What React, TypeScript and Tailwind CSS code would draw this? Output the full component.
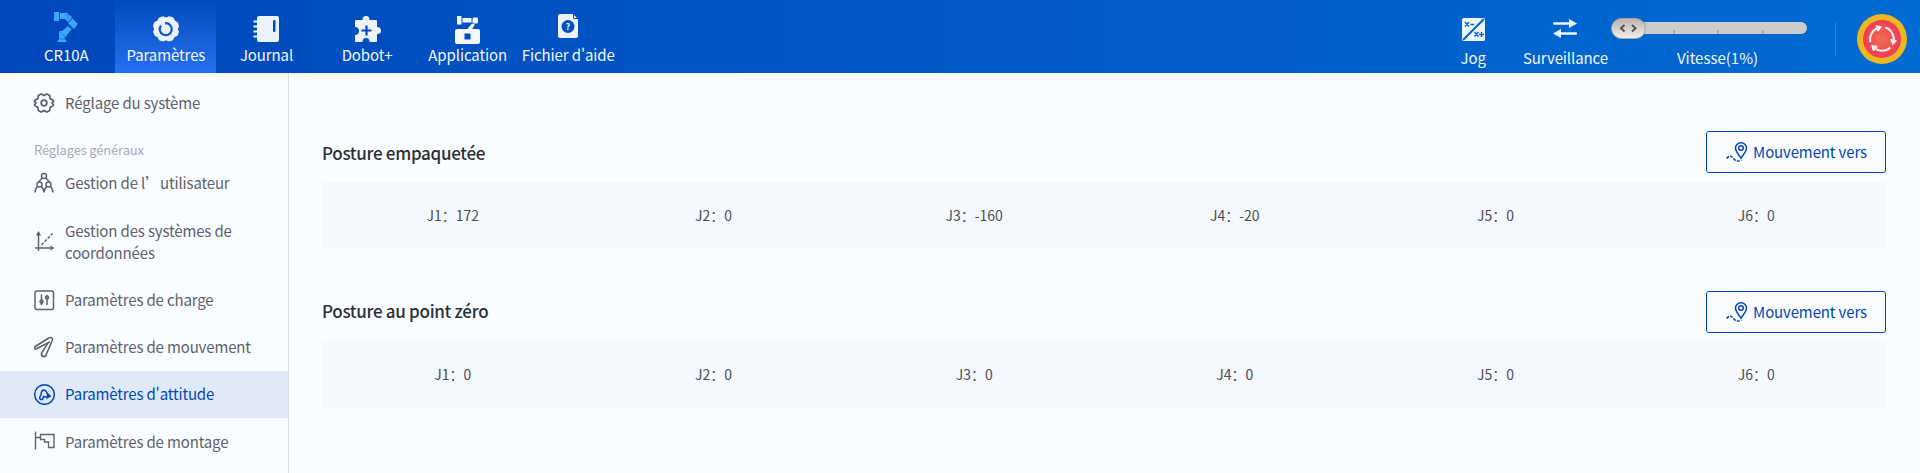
import React from "react";

type P = { children?: React.ReactNode };

const Tab = ({ label, active, first, children }: P & { label: string; active?: boolean; first?: boolean }) => (
  <div
    className={
      "flex h-[73px] w-[100.6px] shrink-0 flex-col items-center " +
      (active ? "bg-linear-to-b from-[#004bbd] to-[#2471ef] " : "") +
      (first ? "pl-[3px]" : "pl-px")
    }
  >
    <div className="mt-[11px] flex h-[32px] items-center">{children}</div>
    <span className="text-[15px] leading-6 tracking-[-0.1px] whitespace-nowrap">{label}</span>
  </div>
);

const Item = ({ label, active, tall, low, children }: P & { label: string; active?: boolean; tall?: boolean; low?: boolean }) => (
  <div
    className={
      "flex shrink-0 items-center pl-[33px] " +
      (tall ? "h-[71px] " : "h-[47px] ") +
      (active ? "bg-[#e0e9f8] text-[#0047bb]" : "text-[#5f616e]")
    }
  >
    <svg width="22" height="22" viewBox="0 0 22 22" fill="none" stroke="currentColor" strokeWidth="1.5" className="mr-[10px] -mt-px shrink-0">
      {children}
    </svg>
    <span className={"w-[200px] text-[15px] leading-[22px] tracking-[-0.15px] " + (low ? "mt-px" : "-mt-px")}>{label}</span>
  </div>
);

const Posture = ({ title, values, second }: { title: string; values: number[]; second?: boolean }) => (
  <section>
    <div className="flex h-[42px] items-center justify-between">
      <h2 className={"text-[17px] font-medium tracking-[-0.3px] text-[#2b2f38] " + (second ? "-mt-0.5" : "mt-px")}>{title}</h2>
      <button className="flex h-[42px] w-[180px] items-center justify-center rounded-[3px] border border-[#0047bb] pl-px text-[15px] tracking-[-0.13px] text-[#0047bb]">
        <svg width="22" height="22" viewBox="0 0 22 22" fill="none" stroke="currentColor" strokeWidth="1.5" className="mr-[5px]">
          <path d="M15 17C11.500 12.500 9.500 10 9.500 7.200a5.500 5.500 0 0 1 11 0C20.500 10 18.500 12.500 15 17Z" />
          <circle cx="15" cy="7" r="2.300" />
          <path d="M.700 17.500C3 14.500 5 14.500 7 17C9 19.700 11 21 15.500 19" strokeDasharray="3 1.200" />
        </svg>
        Mouvement vers
      </button>
    </div>
    <div
      className={
        "grid grid-cols-6 items-center rounded-[4px] bg-[#f5f8fc] text-center text-[14px] text-[#4c4d54] " +
        (second ? "mt-[8px] h-[68px]" : "mt-[9px] h-[67px]")
      }
    >
      {values.map((v, i) => (
        <span key={i} className={second ? "-mt-0.5 pl-px" : "pl-px"}>{`J${i + 1}：${v}`}</span>
      ))}
    </div>
  </section>
);

export default function App() {
  return (
    <div
      lang="zh-CN"
      className="flex h-[473px] w-[1920px] flex-col overflow-hidden bg-[#fafdff] font-['Noto_Sans_CJK_SC',sans-serif]"
    >
      <header className="flex h-[73px] shrink-0 bg-linear-to-r from-[#0047bb] to-[#006bd2] pl-[14.5px] text-[#f2f7ff]">
        <Tab label="CR10A" first>
          <svg width="26" height="32" viewBox="0 0 26 32" fill="#3fa6ff">
            <path d="M1 1h5v9H1zM7 2h8v6H7zM15 3l4 3-4 5-3-3V4zM19 7l6 6-4 5-6-6zM19 18l-7 8-4-5 7-6zM6 20h6l2 4-3 4H6zM6 28h6l2 3H4z" />
            <path d="M6.500 1v8M15 3v5M20 7l-5 5M15 15l4 4M6 20l6 6M5 28h8" stroke="#0b67ce" strokeWidth=".700" />
          </svg>
        </Tab>
        <Tab label="Paramètres" active>
          <svg width="26" height="26" viewBox="0 0 26 26" className="mt-1">
            <path
              fill="#edf3fb"
              stroke="#edf3fb"
              strokeLinejoin="round"
              d="M10 .800 13 2l3-1.200 4 1 1.700 3.400 3 1.600.800 4-1.300 2.200 1.300 2.500-1.200 3.900-3.200 1.500L19.500 24l-3.700 1L13 23.800 10.200 25l-3.900-1.100-1.500-3.100-3-1.500-1.300-3.800L1.800 13 .500 10.500l1-3.900 3-1.500L6.200 2z"
            />
            <path d="M8 9.500A6 6 0 1 0 13 7.200M12 7.300h3.500" fill="none" stroke="#0e5acd" strokeWidth="2.200" />
          </svg>
        </Tab>
        <Tab label="Journal">
          <svg width="26" height="26" viewBox="0 0 26 26" fill="#edf3fb" className="mt-1">
            <rect x="4" y="0" width="22" height="26" rx="2" />
            <path d="M.500 4.500h6v2h-6zM.500 9.500h6v2h-6zM.500 14.500h6v2h-6zM.500 19.500h6v2h-6z" />
            <rect x="20" y="4" width="2.500" height="12" rx="1.200" fill="#004cbd" />
          </svg>
        </Tab>
        <Tab label="Dobot+">
          <svg width="27" height="26" viewBox="0 0 27 26" className="mt-1">
            <path
              fill="#edf3fb"
              d="M2 4h6.500C8.500 1.500 9.500 0 12 0s3.500 1.500 3.500 4H22q1 0 1 1v6c2.500 0 4 1.500 4 3.700S25.500 18 23 18v7q0 1-1 1h-6.500c0-2.500-1-4-3.500-4s-3.500 1.500-3.500 4H2q-1 0-1-1v-6c2.500 0 4-1.500 4-4s-1.500-4-4-4V5q0-1 1-1Z"
            />
            <path d="M12.500 9.500v10M7.500 14.500h10" stroke="#004cbd" strokeWidth="2.200" />
          </svg>
        </Tab>
        <Tab label="Application">
          <svg width="25" height="28" viewBox="0 0 25 28" fill="#f4f9ff" className="mt-1.5">
            <path d="M2 0h4.500v8.500H2zM7.500 2h9v4.500h-9z" />
            <rect x="17.500" y="1.500" width="5.500" height="6" rx="1.500" />
            <path d="m17 7.500 3 1-3.500 5.500h-5zM2 13h21q2 0 2 2v11q0 2-2 2H2q-2 0-2-2V15q0-2 2-2Z" />
            <path d="M9.500 17.500h6v6h-6z" fill="#004fbe" />
          </svg>
        </Tab>
        <Tab label="Fichier d'aide">
          <svg width="20" height="24" viewBox="0 0 20 24" className="-mt-0.5">
            <path fill="#edf3fb" d="M2 0h13l5 5v17q0 2-2 2H2q-2 0-2-2V2q0-2 2-2Z" />
            <path d="M15.500 0v4.500H20" fill="none" stroke="#004fbe" strokeWidth="1" />
            <circle cx="10" cy="12.500" r="6.500" fill="#004fbe" />
            <text x="10" y="15.500" textAnchor="middle" fontSize="8.500" fontWeight="700" fill="#fff">?</text>
          </svg>
        </Tab>

        <div className="ml-auto flex pr-[13px]">
          <div className="mr-[37px] flex flex-col items-center">
            <svg width="23" height="23" viewBox="0 0 23 23" className="mt-[18px]">
              <rect width="23" height="23" rx="1.500" fill="#edf5fd" />
              <path d="M1 22 22 1" stroke="#0062cb" strokeWidth="2" />
              <path d="m3 4 4 4.500M7 4 3 8.500M8.500 6.500H12M12.500 14l4 4.500M16.500 14l-4 4.500M17 16.500h5M19.500 14v5" stroke="#0062cb" strokeWidth="1.400" />
            </svg>
            <span className="mt-[5px] text-[15px] leading-6">Jog</span>
          </div>
          <div className="flex flex-col items-center">
            <svg width="24" height="20" viewBox="0 0 24 20" fill="#edf5fd" className="mt-[19px]">
              <path d="M1 4.500h20M23 14.500H3" stroke="#edf5fd" strokeWidth="2.400" strokeLinecap="round" />
              <path d="m16 0 8 4.500L16 9zM8 10 0 14.500 8 19z" />
            </svg>
            <span className="mt-[7px] text-[15px] leading-6 tracking-[-0.1px]">Surveillance</span>
          </div>
          <div className="ml-[3px] flex w-[196px] flex-col items-center">
            <svg width="196" height="22" viewBox="0 0 196 22" className="mt-[17px]">
              <defs>
                <linearGradient id="knob" x2="0" y2="1">
                  <stop stopColor="#b7b3b0" />
                  <stop offset="1" stopColor="#f4f1ed" />
                </linearGradient>
              </defs>
              <rect x="10" y="5" width="186" height="12" rx="6" fill="#cbcbcb" />
              <path d="M63 13v4M107 13v4M152 13v4" stroke="#a9abae" strokeWidth="2" />
              <rect x=".500" y="1.500" width="34" height="20" rx="10" fill="url(#knob)" stroke="#aaa39d" />
              <path d="m13.500 8-3.500 3.300 3.500 3.200M21 8l3.500 3.300-3.500 3.200" fill="none" stroke="#57534f" strokeWidth="2" />
            </svg>
            <span className="mt-[7px] mr-[-17px] text-[15px] leading-6">Vitesse(1%)</span>
          </div>
          <div className="mt-[22px] ml-[28px] h-[34px] w-px bg-[#2f83dc]" />
          <svg width="50" height="50" viewBox="0 0 50 50" className="mt-[14px] ml-[21px]">
            <defs>
              <radialGradient id="stop">
                <stop stopColor="#ed6f51" />
                <stop offset="1" stopColor="#ee3a59" />
              </radialGradient>
            </defs>
            <circle cx="25" cy="25" r="25" fill="#edb71f" />
            <circle cx="25" cy="25" r="19" fill="url(#stop)" />
            <g fill="none" stroke="#fff0ee" strokeWidth="2">
              <path id="arc" d="M13.500 28A12 12 0 0 1 22.500 13.500M19 12l4.500 1.200-3 4" />
              <use href="#arc" transform="rotate(120 25 25)" />
              <use href="#arc" transform="rotate(240 25 25)" />
            </g>
          </svg>
        </div>
      </header>

      <div className="flex flex-1">
        <aside className="flex h-[400px] w-[289px] shrink-0 flex-col border-r border-[#dadee3] pt-[7px]">
          <Item label="Réglage du système">
            <path d="M8 2 11 3.300 14 2l2.700 1.500.300 3L20.300 8.500v1.300L19 11l1.300 1.300v1.200L17 15.500l-.300 3L14 20l-3-1.300L8 20l-2.700-1.500-.300-3L1.700 13.500v-1.200L3 11 1.700 9.800V8.500L5 6.500l.300-3z" strokeWidth="1.800" strokeLinejoin="round" />
            <circle cx="11" cy="11" r="2.800" strokeWidth="1.800" />
          </Item>
          <div className="mt-[12px] h-[20px] pl-[34px] text-[13px] leading-[22px] tracking-[-0.17px] text-[#a5aab6]">Réglages généraux</div>
          <Item label="Gestion de l’utilisateur" low>
            <circle cx="11" cy="5" r="2.500" />
            <circle cx="6.500" cy="13.500" r="2.500" />
            <circle cx="15.500" cy="13.500" r="2.500" />
            <path d="M9.200 7 5.500 11M12.800 7l3.700 4M2 21.500c0-3 1-4.500 2.800-6M20 21.500c0-3-1-4.500-2.800-6M8.200 15.500c1.800 1.500 2.800 3 2.800 6c0-3 1-4.500 2.800-6" />
          </Item>
          <Item label="Gestion des systèmes de coordonnées" tall low>
            <path d="M5.500 3v18M2 18h17" />
            <path d="M5.500 1 3 5.500h5zM21.500 18l-4-2.500v5z" fill="currentColor" stroke="none" />
            <path d="m8.500 15 11-11.500" strokeDasharray="3 1.500" />
          </Item>
          <Item label="Paramètres de charge">
            <rect x="2" y="2" width="18.500" height="18.500" rx="2" />
            <path d="M8.500 5.500V16M14 6v10" />
            <circle cx="8.500" cy="12.500" r="1.500" />
            <circle cx="14" cy="8.500" r="1.500" />
          </Item>
          <Item label="Paramètres de mouvement">
            <path d="M16.200 1.800 2.300 10.500c-1.300 1-.300 2.900 1.300 2.300L17 5.800" strokeWidth="1.600" />
            <path d="M16.200 1.800c1.800-.900 3.800.500 3.100 2.500L13.300 18.500c-.500 3-5 2.800-4.900-.500.100-1 .600-1.500 1-2.200L15 6.800" strokeWidth="1.600" />
          </Item>
          <Item label="Paramètres d'attitude" active>
            <circle cx="11.500" cy="11.500" r="9.800" />
            <path d="M7.500 16.500c-1.800-1.800-.300-3.500.700-4.500-.500-3 1-5.300 3.500-4.800 1.800.500 1.800 3 4 4.800l-1.700 2.500-3.500-1-1 3z" />
            <path d="m14 9.500 4.500 3.700-5 2.800z" fill="currentColor" stroke="none" />
          </Item>
          <Item label="Paramètres de montage" low>
            <path d="M2.500 1.500v18M3 7.500h4.500V4.500H21v13h-5.500V12h-4V9.500h-4v-2" strokeWidth="1.400" />
          </Item>
        </aside>
        <main className="flex flex-1 flex-col gap-[42px] pt-[58px] pr-[34px] pl-[33px]">
          <Posture title="Posture empaquetée" values={[172, 0, -160, -20, 0, 0]} />
          <Posture title="Posture au point zéro" values={[0, 0, 0, 0, 0, 0]} second />
        </main>
      </div>
    </div>
  );
}
